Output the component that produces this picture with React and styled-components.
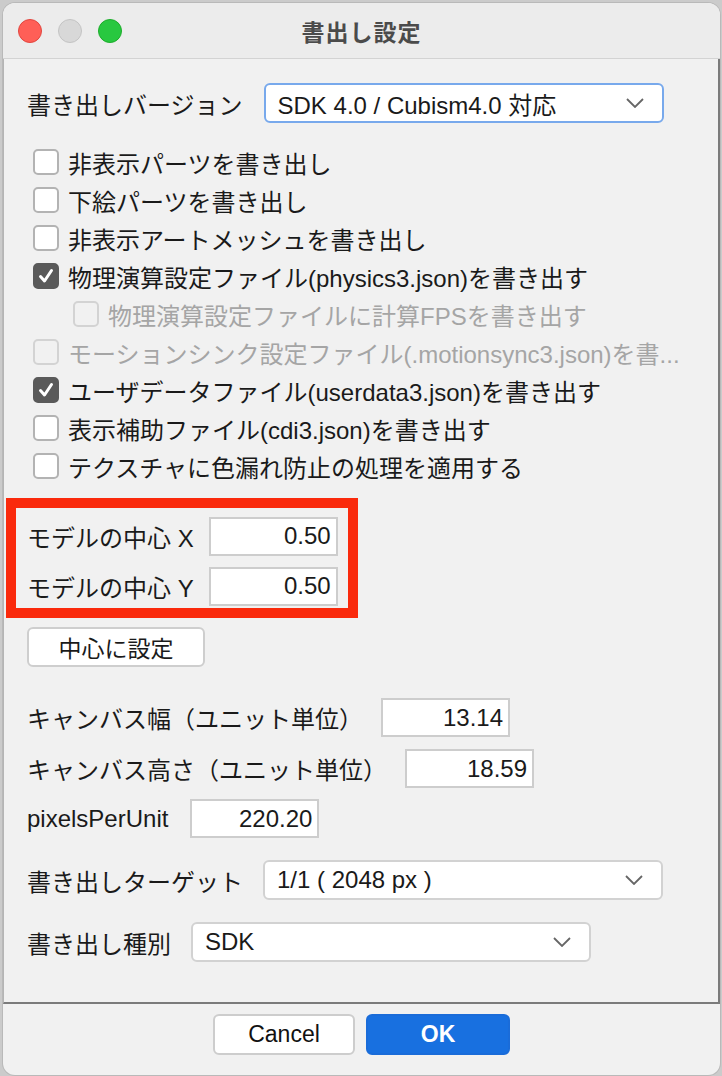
import styled, { createGlobalStyle } from "styled-components";

const GlobalStyle = createGlobalStyle`
  html, body {
    margin: 0;
    padding: 0;
    background: #cbcbcb;
  }
  body {
    font-family: "Liberation Sans", "Noto Sans CJK JP", sans-serif;
    color: #1a1a1a;
  }
`;

const Window = styled.div`
  margin: 3px 2px 1px 3px;
  height: 1072px;
  border-radius: 12px;
  background: #f1f1f1;
  overflow: hidden;
  display: flex;
  flex-direction: column;
  box-shadow: 0 0 0 1px #b9b9b9;
`;

const TitleBar = styled.div`
  height: 55px;
  flex: none;
  background: #ececec;
  border-bottom: 1px solid #d3d3d3;
  display: grid;
  grid-template-columns: 1fr auto 1fr;
  align-items: center;
`;

const Lights = styled.div`
  display: flex;
  gap: 16px;
  padding-left: 15px;
`;

const Light = styled.span`
  width: 22px;
  height: 22px;
  border-radius: 50%;
  background: ${(p) => p.$fill};
  border: 1px solid ${(p) => p.$edge};
`;

const Title = styled.div`
  font-size: 23px;
  font-weight: bold;
  color: #4b4b4b;
  letter-spacing: 1px;
`;

const Panel = styled.div`
  flex: 1;
  background: #f1f1f1;
  border-left: 1px solid #b5b5b5;
  border-right: 2px solid #7b7b7b;
  border-bottom: 2px solid #7b7b7b;
  padding: 24px 30px 0 23px;
  display: flex;
  flex-direction: column;
  font-size: 24px;
`;

const FieldRow = styled.div`
  display: flex;
  align-items: center;
  gap: ${(p) => p.$gap || 21}px;
  margin-top: ${(p) => p.$top || 0}px;
  height: ${(p) => p.$h || 39}px;
`;

const Label = styled.span`
  white-space: nowrap;
`;

const SelectBox = styled.div`
  width: 400px;
  height: 40px;
  box-sizing: border-box;
  background: #fff;
  border: 2px solid ${(p) => (p.$focused ? "#78a9ec" : "#d2d2d2")};
  border-radius: 6px;
  display: flex;
  align-items: center;
  justify-content: space-between;
  padding: 0 18px 0 12px;
  font-size: 24px;
`;

const Chevron = () => (
  <svg width="18" height="10" viewBox="0 0 18 10">
    <path d="M1 1 L9 9 L17 1" fill="none" stroke="#666" strokeWidth="1.8" />
  </svg>
);

const Select = ({ value, focused }) => (
  <SelectBox $focused={focused}>
    <span>{value}</span>
    <Chevron />
  </SelectBox>
);

const CheckList = styled.div`
  margin-top: 20px;
  display: flex;
  flex-direction: column;
`;

const CheckRow = styled.div`
  height: 38px;
  display: flex;
  align-items: center;
  gap: 9px;
  padding-left: ${(p) => (p.$indent ? 46 : 6)}px;
  color: ${(p) => (p.$disabled ? "#a5a5a5" : "#1a1a1a")};
  white-space: nowrap;
`;

const Box = styled.span`
  flex: none;
  width: 26px;
  height: 26px;
  box-sizing: border-box;
  border-radius: 5px;
  border: 2px solid ${(p) => (p.$checked ? "#5a5a5a" : p.$disabled ? "#d3d3d3" : "#b3b3b3")};
  background: ${(p) => (p.$checked ? "#5a5a5a" : p.$disabled ? "#f1f1f1" : "#fff")};
  display: flex;
  align-items: center;
  justify-content: center;
`;

const Tick = () => (
  <svg width="18" height="18" viewBox="0 0 18 18">
    <path d="M3.5 9.5 L7.5 14 L14.5 3.5" fill="none" stroke="#fff" strokeWidth="3" strokeLinecap="round" strokeLinejoin="round" />
  </svg>
);

const Check = ({ children, checked, disabled, indent }) => (
  <CheckRow $disabled={disabled} $indent={indent}>
    <Box $checked={checked} $disabled={disabled}>{checked && <Tick />}</Box>
    <span>{children}</span>
  </CheckRow>
);

const NumberInput = styled.div`
  width: 129px;
  height: 39px;
  box-sizing: border-box;
  background: #fff;
  border: 2px solid #cdcdcd;
  display: flex;
  align-items: center;
  justify-content: flex-end;
  padding-right: 5px;
  font-size: 24px;
`;

const Marked = styled.div`
  margin: 13px 0 0 -21px;
  width: 352px;
  box-sizing: border-box;
  border: 10px solid #fa2a0c;
  padding: 9px 0 3px 11px;
  display: flex;
  flex-direction: column;
  gap: 12px;
`;

const PlainButton = styled.button`
  margin-top: 9px;
  width: 178px;
  height: 40px;
  background: #fff;
  border: 2px solid #cecece;
  border-radius: 6px;
  font: inherit;
  font-size: 23px;
  color: #1a1a1a;
  padding: 0;
`;

const Footer = styled.div`
  flex: none;
  height: 71px;
  display: flex;
  justify-content: center;
  align-items: flex-start;
  padding-top: 10px;
  box-sizing: border-box;
  gap: 11px;
`;

const DialogButton = styled.button`
  width: ${(p) => (p.$primary ? 144 : 142)}px;
  height: 41px;
  border-radius: 6px;
  border: 2px solid ${(p) => (p.$primary ? "#1a6cd9" : "#cdcdcd")};
  background: ${(p) => (p.$primary ? "#1870e0" : "#fff")};
  color: ${(p) => (p.$primary ? "#fff" : "#111")};
  font-family: "Liberation Sans", "Noto Sans CJK JP", sans-serif;
  font-size: 23px;
  font-weight: ${(p) => (p.$primary ? "bold" : "normal")};
  padding: 0;
`;

export default function App() {
  return (
    <>
      <GlobalStyle />
      <Window>
        <TitleBar>
          <Lights>
            <Light $fill="#ff5f57" $edge="#e2463f" />
            <Light $fill="#d8d8d8" $edge="#c4c4c4" />
            <Light $fill="#28c840" $edge="#1dad2b" />
          </Lights>
          <Title>書出し設定</Title>
          <div />
        </TitleBar>
        <Panel>
          <FieldRow $h={40}>
            <Label>書き出しバージョン</Label>
            <Select value="SDK 4.0 / Cubism4.0 対応" focused />
          </FieldRow>
          <CheckList>
            <Check>非表示パーツを書き出し</Check>
            <Check>下絵パーツを書き出し</Check>
            <Check>非表示アートメッシュを書き出し</Check>
            <Check checked>物理演算設定ファイル(physics3.json)を書き出す</Check>
            <Check indent disabled>物理演算設定ファイルに計算FPSを書き出す</Check>
            <Check disabled>モーションシンク設定ファイル(.motionsync3.json)を書...</Check>
            <Check checked>ユーザデータファイル(userdata3.json)を書き出す</Check>
            <Check>表示補助ファイル(cdi3.json)を書き出す</Check>
            <Check>テクスチャに色漏れ防止の処理を適用する</Check>
          </CheckList>
          <Marked>
            <FieldRow $h={38} $gap={15}>
              <Label>モデルの中心 X</Label>
              <NumberInput>0.50</NumberInput>
            </FieldRow>
            <FieldRow $h={38} $gap={15}>
              <Label>モデルの中心 Y</Label>
              <NumberInput>0.50</NumberInput>
            </FieldRow>
          </Marked>
          <div>
            <PlainButton>中心に設定</PlainButton>
          </div>
          <FieldRow $top={31} $gap={18}>
            <Label>キャンバス幅（ユニット単位）</Label>
            <NumberInput>13.14</NumberInput>
          </FieldRow>
          <FieldRow $top={12} $gap={18}>
            <Label>キャンバス高さ（ユニット単位）</Label>
            <NumberInput>18.59</NumberInput>
          </FieldRow>
          <FieldRow $top={11} $gap={22}>
            <Label>pixelsPerUnit</Label>
            <NumberInput>220.20</NumberInput>
          </FieldRow>
          <FieldRow $top={22} $h={40} $gap={20}>
            <Label>書き出しターゲット</Label>
            <Select value="1/1 ( 2048 px )" />
          </FieldRow>
          <FieldRow $top={22} $h={40} $gap={20}>
            <Label>書き出し種別</Label>
            <Select value="SDK" />
          </FieldRow>
        </Panel>
        <Footer>
          <DialogButton>Cancel</DialogButton>
          <DialogButton $primary>OK</DialogButton>
        </Footer>
      </Window>
    </>
  );
}
